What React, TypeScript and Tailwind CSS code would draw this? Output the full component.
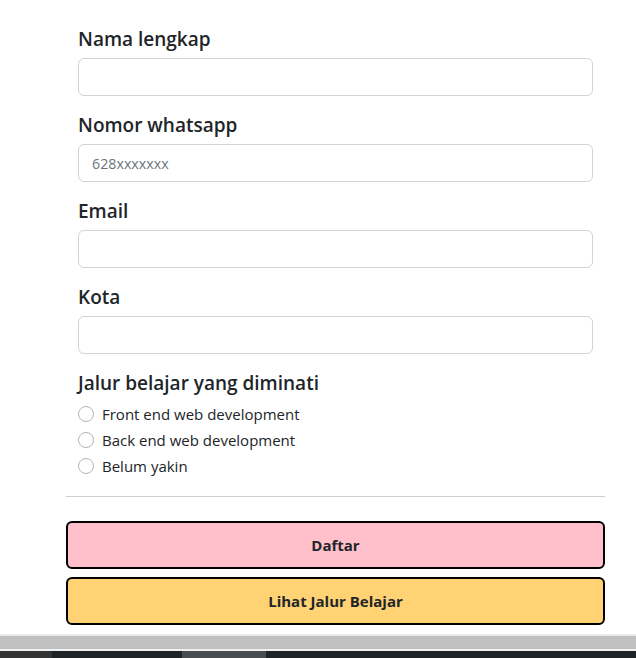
import { useState } from "react";

const fields = [
  { label: "Nama lengkap", placeholder: "" },
  { label: "Nomor whatsapp", placeholder: "628xxxxxxx" },
  { label: "Email", placeholder: "" },
  { label: "Kota", placeholder: "" },
];

const paths = ["Front end web development", "Back end web development", "Belum yakin"];

const App = () => {
  const [choice, setChoice] = useState("");

  return (
    <div className="min-h-[658px] bg-white flex flex-col font-['Open_Sans',sans-serif] text-[#212529]">
      <div className="ml-[66px] w-[539px] pt-6 flex-1">
        <form className="px-3">
          {fields.map((f) => (
            <div key={f.label} className="mb-[14px]">
              <label className="block text-[19px] font-semibold leading-[30px] mb-1">{f.label}</label>
              <input
                type="text"
                placeholder={f.placeholder}
                className="block w-full h-[38px] rounded-md border border-[#ced4da] px-[13px] text-[14.25px] placeholder:text-[#6c757d] outline-none"
              />
            </div>
          ))}

          {/* Jalur belajar */}
          <div className="text-[19px] font-semibold leading-[30px] mb-[3px]">Jalur belajar yang diminati</div>
          {paths.map((p) => (
            <label key={p} className="flex items-center gap-2 h-[26px] text-[15px] cursor-pointer">
              <input
                type="radio"
                name="jalur"
                checked={choice === p}
                onChange={() => setChoice(p)}
                className="sr-only"
              />
              <span className="w-4 h-4 rounded-full border border-[#b5b5b5] bg-white flex items-center justify-center">
                {choice === p && <span className="w-2 h-2 rounded-full bg-[#0d6efd]" />}
              </span>
              {p}
            </label>
          ))}
        </form>

        <hr className="mt-[17px] border-t border-[#cfcfcf]" />

        <div className="mt-6 flex flex-col gap-2">
          <button className="h-12 w-full rounded-md border-2 border-black bg-[#ffc0cb] text-[15px] font-bold">
            Daftar
          </button>
          <button className="h-12 w-full rounded-md border-2 border-black bg-[#ffd373] text-[15px] font-bold">
            Lihat Jalur Belajar
          </button>
        </div>
      </div>

      {/* bottom strip */}
      <div className="mt-[9px]">
        <div className="h-[2px] bg-[#ebebeb]" />
        <div className="h-[13px] bg-[#c0c0c0]" />
        <div className="h-[2px] bg-[#f0f0f0]" />
        <div className="h-[7px] flex bg-[#202326]">
          <div className="w-[52px] bg-[#333333]" />
          <div className="w-[130px]" />
          <div className="w-[84px] bg-[#4a4d50]" />
        </div>
      </div>
    </div>
  );
};

export default App;
